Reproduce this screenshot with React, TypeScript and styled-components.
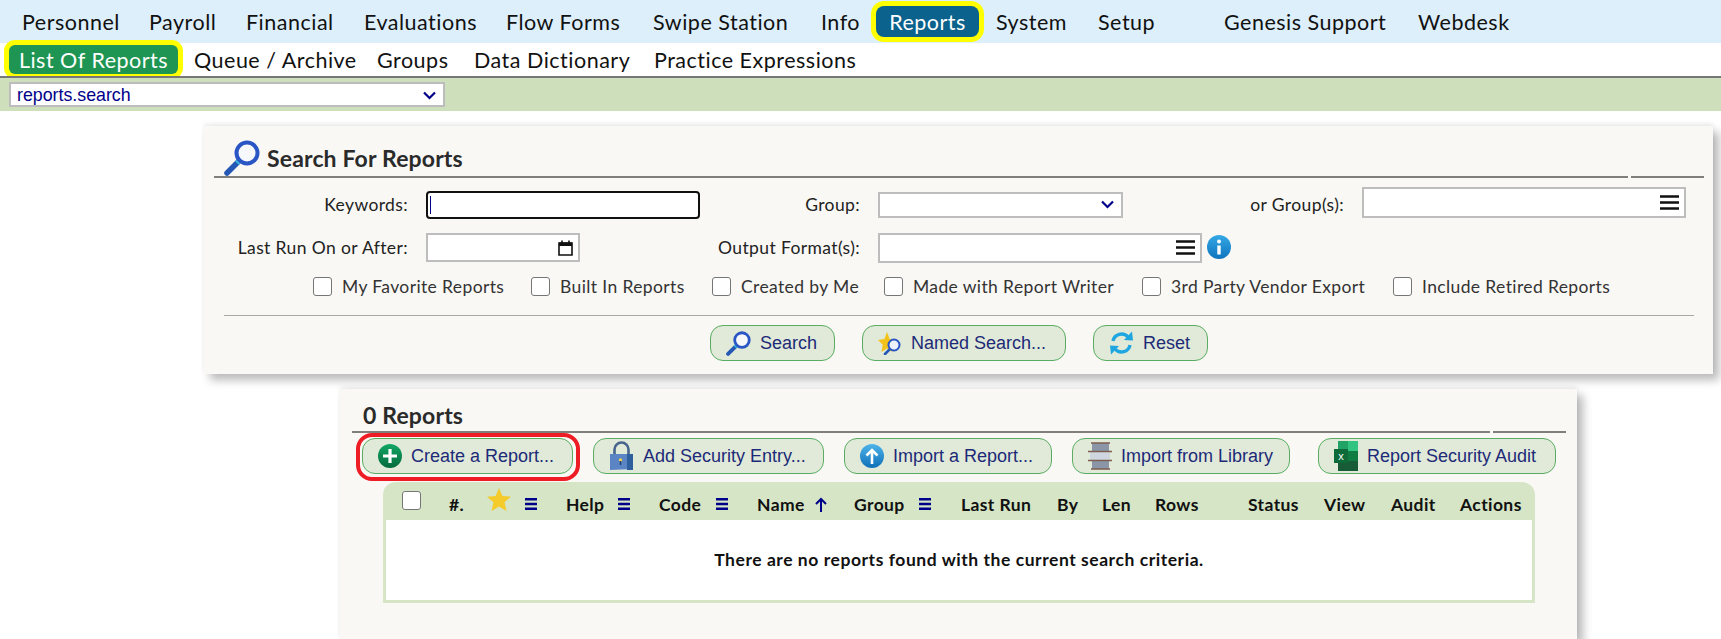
import React from "react";
import styled, { createGlobalStyle } from "styled-components";

const Global = createGlobalStyle`
  html, body { margin: 0; padding: 0; background: #fff; overflow: hidden; }
  body { width: 1721px; height: 639px; font-family: "Lato", "Noto Sans", sans-serif; color: #1a1a1a; }
`;

const Page = styled.div`
  width: 1721px;
  height: 639px;
  overflow: hidden;
  display: flex;
  flex-direction: column;
`;

const TopNav = styled.nav`
  height: 43px;
  background: #ddeffb;
  display: flex;
  align-items: center;
  padding-left: 22px;
  flex: none;
`;

const SubNav = styled.nav`
  height: 33px;
  background: #fff;
  display: flex;
  align-items: center;
  padding-left: 9px;
  flex: none;
`;

const NavItem = styled.a<{ $w: number }>`
  width: ${(p) => p.$w}px;
  flex: none;
  font-size: 21.5px;
  letter-spacing: 0.5px;
  line-height: 26px;
  color: #111;
  white-space: nowrap;
`;

const TopActive = styled.a`
  width: 103px;
  margin-left: -13px;
  margin-right: 17px;
  height: 31px;
  flex: none;
  display: flex;
  align-items: center;
  justify-content: center;
  background: #0b628c;
  color: #fff;
  font-size: 21.5px;
  letter-spacing: 0.5px;
  border-radius: 8px;
  box-shadow: 0 0 0 5px #ffff00;
`;

const SubActive = styled.a`
  width: 169px;
  height: 29px;
  margin-right: 16px;
  flex: none;
  display: flex;
  align-items: center;
  justify-content: center;
  background: #1e9553;
  color: #fff;
  font-size: 21.5px;
  letter-spacing: 0.5px;
  border-radius: 6px;
  box-shadow: 0 0 0 5px #ffff00;
`;

const ContextBar = styled.div`
  height: 33px;
  flex: none;
  background: #cddfbb;
  border-top: 2px solid #777;
  padding-left: 9px;
  display: flex;
  align-items: center;
`;

const ContextSelect = styled.div`
  width: 436px;
  height: 25px;
  box-sizing: border-box;
  background: #fff;
  border: 2px solid #bdbdbd;
  display: flex;
  align-items: center;
  justify-content: space-between;
  padding: 1px 6px 0;
  font-family: "Liberation Sans", Arial, sans-serif;
  font-size: 17.8px;
  color: #00008b;
`;

const Panel = styled.section<{ $left: number; $width: number; $height: number; $top: number }>`
  flex: none;
  box-sizing: border-box;
  margin-left: ${(p) => p.$left}px;
  margin-top: ${(p) => p.$top}px;
  width: ${(p) => p.$width}px;
  height: ${(p) => p.$height}px;
  background: #f9f8f4;
  box-shadow: 6px 6px 9px rgba(0, 0, 0, 0.28), 0 -3px 4px rgba(0, 0, 0, 0.06);
`;

const SearchPanel = styled(Panel)`
  padding: 12px 9px 0 10px;
`;

const ResultsPanel = styled(Panel)`
  padding: 10px 11px 0 12px;
`;

const PanelTitle = styled.div<{ $h: number }>`
  height: ${(p) => p.$h}px;
  box-sizing: border-box;
  display: flex;
  align-items: flex-end;
  gap: 7px;
`;

const SearchTitleRow = styled(PanelTitle)`
  padding-left: 10px;
`;

const TitleText = styled.h2`
  margin: 0 0 3px;
  font-size: 23px;
  letter-spacing: 0.15px;
  line-height: 30px;
  font-weight: 700;
  color: #2a2a2a;
`;

const ResultsTitle = styled(TitleText)`
  margin: 0 0 1px 11px;
`;

const Rule = styled.div`
  display: flex;
  gap: 3px;
  height: 2px;
  flex: none;
`;

const RuleMain = styled.div`
  flex: 1;
  background: #807f7c;
`;

const RuleEnd = styled.div`
  width: 73px;
  background: #807f7c;
`;

const FormGrid = styled.div`
  display: grid;
  margin: 10px 0 0 10px;
  grid-template-columns: 202px 274px 178px 324px 160px 324px;
  grid-template-rows: 33px 33px;
  row-gap: 10px;
  align-items: center;
`;

const FieldLabel = styled.label`
  font-size: 17.5px;
  letter-spacing: 0.38px;
  color: #222;
  text-align: right;
  padding-right: 18px;
  white-space: nowrap;
`;

const KeywordInput = styled.div`
  width: 274px;
  height: 28px;
  box-sizing: border-box;
  background: #fff;
  border: 2px solid #111;
  border-radius: 4px;
  padding: 3px 2px;
  display: flex;
`;

const Caret = styled.span`
  width: 1px;
  height: 100%;
  background: #00008b;
`;

const BoxField = styled.div<{ $w: number; $h: number }>`
  width: ${(p) => p.$w}px;
  height: ${(p) => p.$h}px;
  box-sizing: border-box;
  background: #fff;
  border: 2px solid #bdbdbd;
  display: flex;
  align-items: center;
  justify-content: flex-end;
  padding: 0 5px;
`;

const InfoWrap = styled.div`
  margin: -2px 0 0 5px;
  display: flex;
`;

const GroupsField = styled(BoxField)`
  margin-top: -4px;
`;

const CheckRow = styled.div`
  display: flex;
  margin-top: 9px;
  height: 27px;
  align-items: center;
  margin-left: 99px;
`;

const CheckItem = styled.label<{ $w: number }>`
  width: ${(p) => p.$w}px;
  flex: none;
  display: flex;
  align-items: center;
  gap: 10px;
  font-size: 17.5px;
  letter-spacing: 0.38px;
  color: #333;
  white-space: nowrap;
`;

const CheckBox = styled.span`
  width: 19px;
  height: 19px;
  box-sizing: border-box;
  flex: none;
  background: #fff;
  border: 1.5px solid #767676;
  border-radius: 3px;
`;

const Separator = styled.div`
  height: 1px;
  background: #a9a8a5;
  margin: 15px 10px 0 10px;
`;

const SearchButtons = styled.div`
  display: flex;
  justify-content: center;
  gap: 27px;
  margin-top: 9px;
`;

const ActionButton = styled.button<{ $w: number }>`
  position: relative;
  flex: none;
  width: ${(p) => p.$w}px;
  height: 36px;
  box-sizing: border-box;
  display: flex;
  align-items: center;
  gap: 9px;
  padding: 0 0 0 15px;
  background: #e1ead8;
  border: 1px solid #59ad62;
  border-radius: 13px;
  font-family: "Liberation Sans", Arial, sans-serif;
  font-size: 18px;
  color: #1d2a78;
  white-space: nowrap;
`;

const RedRing = styled.span`
  position: absolute;
  inset: -6px -8px -8px -7px;
  border: 4px solid #ee1c25;
  border-radius: 16px;
  pointer-events: none;
`;

const ResultsButtons = styled.div`
  display: flex;
  gap: 20px;
  margin: 5px 0 0 10px;
`;

const AuditButton = styled(ActionButton)`
  margin-left: 8px;
`;

const Table = styled.div`
  width: 1152px;
  margin: 8px 0 0 31px;
`;

const TableHead = styled.div`
  height: 38px;
  box-sizing: border-box;
  display: grid;
  grid-template-columns: 47px 38px 38px 41px 52px 41px 57px 41px 58px 39px 65px 42px 96px 45px 53px 93px 76px 67px 69px 62px;
  align-items: center;
  padding: 6px 0 0 19px;
  background: #d5e5c5;
  border-radius: 13px 13px 0 0;
`;

const HeadCell = styled.span`
  font-size: 17.5px;
  letter-spacing: 0.4px;
  font-weight: 700;
  color: #111;
  white-space: nowrap;
`;

const HeadCheck = styled(CheckBox)`
  margin-top: -7px;
`;

const HeadStar = styled.span`
  display: flex;
  margin-top: -10px;
`;

const TableBody = styled.div`
  height: 83px;
  box-sizing: border-box;
  background: #fff;
  border: 3px solid #d5e5c5;
  border-top: 0;
  padding-bottom: 2px;
  display: flex;
  align-items: center;
  justify-content: center;
  font-size: 17.5px;
  letter-spacing: 0.55px;
  font-weight: 700;
  color: #111;
`;

const Chevron = () => (
  <svg width="15" height="9" viewBox="0 0 14 9">
    <path d="M1.500 1.500 7 7l5.500-5.500" fill="none" stroke="#00008b" strokeWidth="2.200" />
  </svg>
);

const GroupChevronWrap = styled.span`
  display: flex;
  margin-right: 1px;
`;

const Burger = () => (
  <svg width="19" height="15" viewBox="0 0 19 15">
    <path d="M0 1.500h19M0 7.500h19M0 13.500h19" stroke="#111" strokeWidth="2.500" />
  </svg>
);

const MiniBurger = () => (
  <svg width="12" height="12" viewBox="0 0 12 12">
    <path d="M0 1.200h12M0 6h12M0 10.800h12" stroke="#00008b" strokeWidth="2.400" />
  </svg>
);

const Calendar = () => (
  <svg width="15" height="16" viewBox="0 0 15 16">
    <path d="M1 3h13v12H1z" fill="none" stroke="#111" strokeWidth="1.600" />
    <path d="M1 2.500h13V6H1z" fill="#111" />
    <path d="M4 0.500v3M11 0.500v3" stroke="#111" strokeWidth="1.600" />
  </svg>
);

const Magnifier = ({ size }: { size: number }) => (
  <svg width={size} height={size} viewBox="0 0 36 36">
    <path d="M3 33 14 22" stroke="#2557b5" strokeWidth="5.500" strokeLinecap="round" />
    <path d="M13 23l2-2" stroke="#35c0dd" strokeWidth="5" />
    <circle cx="23" cy="13" r="10.500" fill="#f6f8fc" stroke="#2a55c4" strokeWidth="4" />
  </svg>
);

const NamedSearchIcon = () => (
  <svg width="24" height="24" viewBox="0 0 24 24">
    <path d="M9 1 11.600 8 18 9 13.300 13.800 14.500 21 9 17.600 3.500 21 4.700 13.800 0 9 6.400 8Z" fill="#f2c21b" />
    <path d="M7 23l5-5" stroke="#2557b5" strokeWidth="2.600" strokeLinecap="round" />
    <circle cx="16" cy="14" r="5.500" fill="#eef3fb" stroke="#2a55c4" strokeWidth="2" />
  </svg>
);

const ResetIcon = () => (
  <svg width="25" height="24" viewBox="0 0 25 24">
    <path d="M4 10a8.600 8.600 0 0 1 15-4" fill="none" stroke="#1fa6e0" strokeWidth="3.400" />
    <path d="M15 9l9 .5-1-9z" fill="#1fa6e0" />
    <path d="M21 14a8.600 8.600 0 0 1-15 4" fill="none" stroke="#1fa6e0" strokeWidth="3.400" />
    <path d="M10 15l-9-.5 1 9z" fill="#1fa6e0" />
  </svg>
);

const PlusIcon = () => (
  <svg width="24" height="24" viewBox="0 0 24 24">
    <defs>
      <linearGradient id="plusFill" x1="0" y1="0" x2="0" y2="1">
        <stop offset="0" stopColor="#12a765" />
        <stop offset="1" stopColor="#05693c" />
      </linearGradient>
    </defs>
    <circle cx="12" cy="12" r="12" fill="url(#plusFill)" />
    <path d="M12 5v14M5 12h14" stroke="#fff" strokeWidth="3.200" />
  </svg>
);

const LockIcon = () => (
  <svg width="25" height="30" viewBox="0 0 25 30">
    <path d="M5.500 14V8.500a7 7 0 0 1 14 0V14" fill="none" stroke="#47648f" strokeWidth="2.600" />
    <path d="M1 13h23v15l-23 1z" fill="#5a84c4" />
    <path d="M18 13h6v16h-6z" fill="#2f5f9d" />
    <circle cx="11.500" cy="19" r="1.700" fill="#f2d24b" />
    <path d="M11.500 20v4" stroke="#26416f" strokeWidth="1.500" />
  </svg>
);

const UpIcon = () => (
  <svg width="24" height="24" viewBox="0 0 24 24">
    <defs>
      <linearGradient id="upFill" x1="0" y1="0" x2="0" y2="1">
        <stop offset="0" stopColor="#4cb4ea" />
        <stop offset="1" stopColor="#0f6fb8" />
      </linearGradient>
    </defs>
    <circle cx="12" cy="12" r="12" fill="url(#upFill)" />
    <path d="M12 20V6M6.500 11.500 12 6l5.500 5.500" fill="none" stroke="#fff" strokeWidth="2.600" />
  </svg>
);

const BooksIcon = () => (
  <svg width="24" height="32" viewBox="0 0 24 32">
    <path d="M4 3h17v8H4z" fill="#8b97a8" />
    <path d="M2 12h20v8H2z" fill="#cfd6df" />
    <path d="M4 21h17v8H4z" fill="#8b97a8" />
    <path d="M3 3h19M0 11.500h24M0 20.500h24M3 29h19" stroke="#7d5f4f" strokeWidth="1.500" />
  </svg>
);

const ExcelIcon = () => (
  <svg width="24" height="32" viewBox="0 0 24 32">
    <path d="M4 1h20v30H4z" fill="#21a366" />
    <path d="M14 1h10v10H14z" fill="#33c481" />
    <path d="M14 11h10v10H14z" fill="#107c41" />
    <path d="M4 21h20v10H4z" fill="#185c37" />
    <path d="M0 9h14v14H0z" fill="#0d6b3a" />
    <text x="7" y="20" textAnchor="middle" fontSize="11" fill="#fff" fontFamily="Liberation Sans">x</text>
  </svg>
);

const InfoIcon = () => (
  <svg width="24" height="24" viewBox="0 0 24 24">
    <defs>
      <linearGradient id="infoFill" x1="0" y1="0" x2="0" y2="1">
        <stop offset="0" stopColor="#35a9e6" />
        <stop offset="1" stopColor="#0e73bd" />
      </linearGradient>
    </defs>
    <circle cx="12" cy="12" r="12" fill="url(#infoFill)" />
    <circle cx="12" cy="6.500" r="2" fill="#fff" />
    <path d="M12 10.500v9" stroke="#fff" strokeWidth="3.400" />
  </svg>
);

const StarIcon = () => (
  <svg width="24" height="23" viewBox="0 0 24 23">
    <path d="M12 0l3.400 8 8.600.7-6.500 5.600 2 8.700L12 18.400 4.500 23l2-8.700L0 8.700 8.600 8z" fill="#f4cb2a" />
  </svg>
);

const UpArrow = () => (
  <svg width="12" height="15" viewBox="0 0 12 15">
    <path d="M6 15V2M1 7l5-5 5 5" fill="none" stroke="#00008b" strokeWidth="2" />
  </svg>
);

const topItems: [string, number][] = [
  ["Personnel", 127],
  ["Payroll", 97],
  ["Financial", 118],
  ["Evaluations", 142],
  ["Flow Forms", 147],
  ["Swipe Station", 168],
  ["Info", 68],
];

const subItems: [string, number][] = [
  ["Queue / Archive", 183],
  ["Groups", 97],
  ["Data Dictionary", 180],
  ["Practice Expressions", 210],
];

const checks: [string, number][] = [
  ["My Favorite Reports", 218],
  ["Built In Reports", 181],
  ["Created by Me", 172],
  ["Made with Report Writer", 258],
  ["3rd Party Vendor Export", 251],
  ["Include Retired Reports", 220],
];

const sortable = ["Help", "Code"];

export default function App() {
  return (
    <Page>
      <Global />
      <TopNav>
        {topItems.map(([label, w]) => (
          <NavItem key={label} $w={w}>{label}</NavItem>
        ))}
        <TopActive>Reports</TopActive>
        <NavItem $w={102}>System</NavItem>
        <NavItem $w={126}>Setup</NavItem>
        <NavItem $w={194}>Genesis Support</NavItem>
        <NavItem $w={100}>Webdesk</NavItem>
      </TopNav>
      <SubNav>
        <SubActive>List Of Reports</SubActive>
        {subItems.map(([label, w]) => (
          <NavItem key={label} $w={w}>{label}</NavItem>
        ))}
      </SubNav>
      <ContextBar>
        <ContextSelect>
          reports.search
          <Chevron />
        </ContextSelect>
      </ContextBar>

      <SearchPanel $left={204} $width={1509} $height={248} $top={15}>
        <SearchTitleRow $h={38}>
          <Magnifier size={36} />
          <TitleText>Search For Reports</TitleText>
        </SearchTitleRow>
        <Rule>
          <RuleMain />
          <RuleEnd />
        </Rule>
        <FormGrid>
          <FieldLabel>Keywords:</FieldLabel>
          <KeywordInput><Caret /></KeywordInput>
          <FieldLabel>Group:</FieldLabel>
          <BoxField $w={245} $h={26}><GroupChevronWrap><Chevron /></GroupChevronWrap></BoxField>
          <FieldLabel>or Group(s):</FieldLabel>
          <GroupsField $w={324} $h={31}><Burger /></GroupsField>

          <FieldLabel>Last Run On or After:</FieldLabel>
          <BoxField $w={154} $h={29}><Calendar /></BoxField>
          <FieldLabel>Output Format(s):</FieldLabel>
          <BoxField $w={324} $h={30}><Burger /></BoxField>
          <InfoWrap><InfoIcon /></InfoWrap>
        </FormGrid>
        <CheckRow>
          {checks.map(([label, w]) => (
            <CheckItem key={label} $w={w}>
              <CheckBox />
              {label}
            </CheckItem>
          ))}
        </CheckRow>
        <Separator />
        <SearchButtons>
          <ActionButton $w={125}><Magnifier size={25} />Search</ActionButton>
          <ActionButton $w={204}><NamedSearchIcon />Named Search...</ActionButton>
          <ActionButton $w={115}><ResetIcon />Reset</ActionButton>
        </SearchButtons>
      </SearchPanel>

      <ResultsPanel $left={340} $width={1237} $height={250} $top={15}>
        <PanelTitle $h={32}>
          <ResultsTitle>0 Reports</ResultsTitle>
        </PanelTitle>
        <Rule>
          <RuleMain />
          <RuleEnd />
        </Rule>
        <ResultsButtons>
          <ActionButton $w={211}><PlusIcon />Create a Report...<RedRing /></ActionButton>
          <ActionButton $w={231}><LockIcon />Add Security Entry...</ActionButton>
          <ActionButton $w={208}><UpIcon />Import a Report...</ActionButton>
          <ActionButton $w={218}><BooksIcon />Import from Library</ActionButton>
          <AuditButton $w={238}><ExcelIcon />Report Security Audit</AuditButton>
        </ResultsButtons>
        <Table>
          <TableHead>
            <HeadCheck />
            <HeadCell>#.</HeadCell>
            <HeadStar><StarIcon /></HeadStar>
            <MiniBurger />
            {sortable.map((h) => (
              <React.Fragment key={h}>
                <HeadCell>{h}</HeadCell>
                <MiniBurger />
              </React.Fragment>
            ))}
            <HeadCell>Name</HeadCell>
            <UpArrow />
            <HeadCell>Group</HeadCell>
            <MiniBurger />
            <HeadCell>Last Run</HeadCell>
            <HeadCell>By</HeadCell>
            <HeadCell>Len</HeadCell>
            <HeadCell>Rows</HeadCell>
            <HeadCell>Status</HeadCell>
            <HeadCell>View</HeadCell>
            <HeadCell>Audit</HeadCell>
            <HeadCell>Actions</HeadCell>
          </TableHead>
          <TableBody>There are no reports found with the current search criteria.</TableBody>
        </Table>
      </ResultsPanel>
    </Page>
  );
}
